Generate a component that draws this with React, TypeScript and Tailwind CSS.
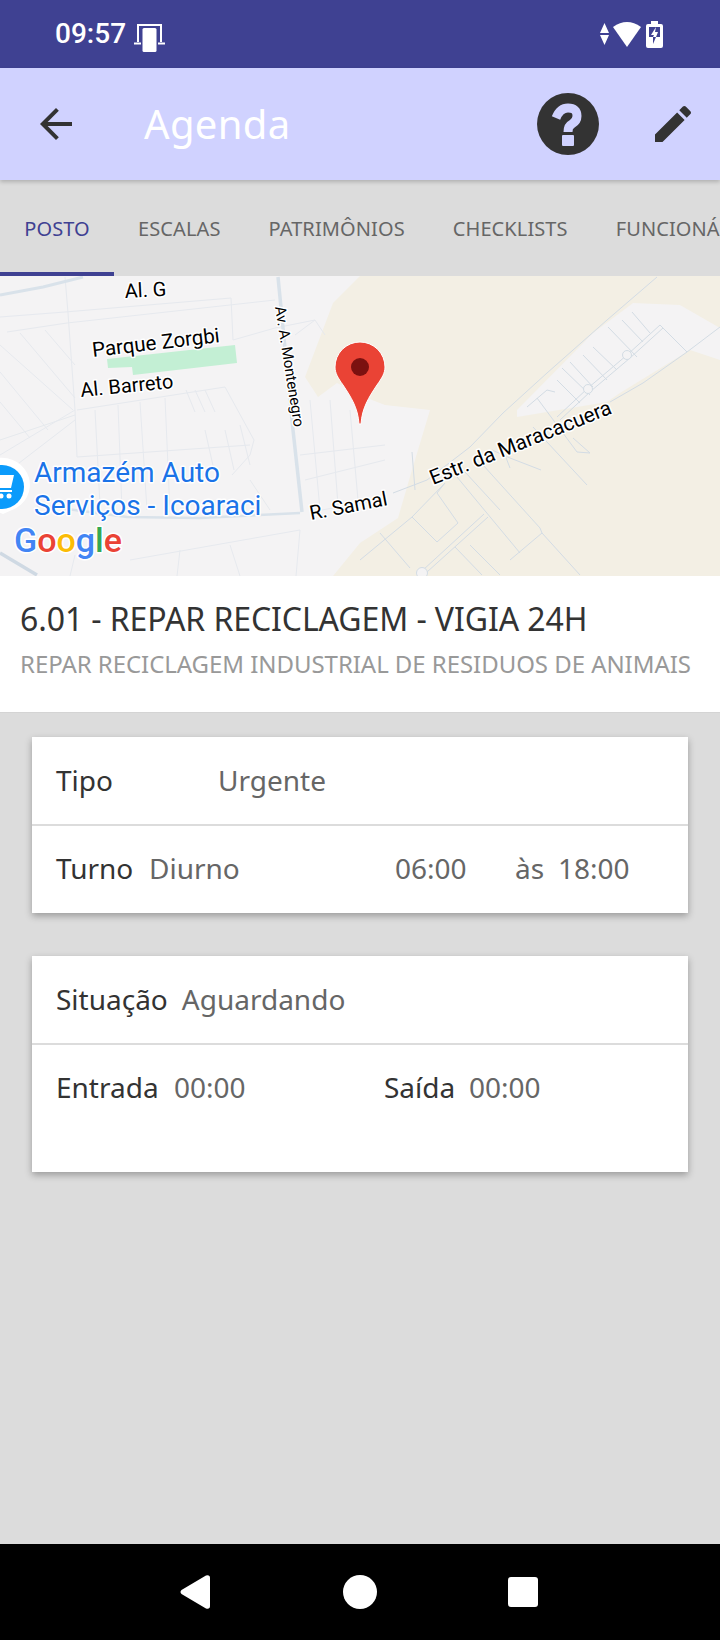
const roads = [
  "M0 295 L43 287 L83 277",
  "M278 277 L293 430 L302 512",
  "M37 505 L127 517 L200 518 L300 513",
  "M0 553 L37 575",
];

const streets = [
  "M65 277 L68 313 L75 410 L77 457",
  "M0 317 L65 312 L231 298 L233 340",
  "M7 332 L67 323 L275 300",
  "M0 345 L73 410",
  "M20 333 L75 398",
  "M45 330 L75 365",
  "M0 372 L48 430",
  "M0 402 L30 438",
  "M75 415 L0 440",
  "M75 420 L10 470",
  "M0 455 L75 410",
  "M77 410 L225 387 L254 440 L250 455 L232 475",
  "M95 410 L100 505",
  "M118 405 L122 510",
  "M140 402 L147 510",
  "M165 398 L170 512",
  "M186 390 L195 412",
  "M195 390 L205 412",
  "M205 390 L215 412",
  "M205 430 L214 470",
  "M225 430 L234 470",
  "M240 425 L250 465",
  "M77 457 L250 445",
  "M250 480 L270 510",
  "M233 340 L275 328",
  "M275 328 L315 320 L325 335",
  "M295 335 L315 320",
  "M310 400 L320 510",
  "M330 400 L338 505",
  "M350 410 L358 500",
  "M300 455 L385 445",
  "M305 480 L385 460",
  "M130 560 L300 530 L296 576",
  "M180 550 L177 576",
  "M70 576 L75 555",
  "M230 545 L240 576",
  "M310 512 L380 500",
];

const darkStreets = [
  "M657 277 L607 320 L547 373 L503 413 L470 447 L427 480 L393 493",
  "M720 327 L687 352 L643 383 L610 402",
  "M660 325 L627 355 L588 388 L557 417",
  "M663 328 L630 358 L591 391 L560 420",
  "M660 325 L687 352",
  "M632 312 L650 333",
  "M622 320 L643 342",
  "M608 327 L637 357",
  "M593 347 L617 370",
  "M583 355 L607 380",
  "M570 362 L593 387",
  "M562 368 L590 395",
  "M557 380 L580 403",
  "M527 407 L547 390 L555 392",
  "M537 398 L577 452 L590 453",
  "M573 438 L590 453",
  "M533 427 L587 485",
  "M483 465 L540 528 L542 533 L580 575",
  "M457 477 L520 553",
  "M465 472 L500 510",
  "M445 483 L437 493 L458 523 L437 542 L412 517 L445 483",
  "M488 517 L427 572",
  "M484 514 L423 570",
  "M542 533 L510 560",
  "M360 560 L412 517",
  "M455 547 L482 575",
  "M380 533 L410 568",
  "M470 545 L500 575",
  "M492 450 L510 458 L541 470",
  "M505 455 L510 468",
  "M412 452 L415 490",
];

function MapView() {
  return (
    <svg viewBox="0 276 720 300" className="block h-[300px] w-[720px] bg-[#f3efe4]">
      <path d="M0 276 L360 276 L333 303 L305 377 L318 397 L337 383 L372 400 L385 405 L430 410 L412 470 L398 518 L360 543 L333 576 L0 576 Z" fill="#f4f3f4" />
      <path d="M633 303 L680 305 L720 328 L720 360 L690 350 L620 393 L607 402 L517 417 L517 410 L593 333 Z" fill="#f4f3f4" />
      <path d="M107 359 L235 345 L237 363 L133 375 L132 367 L108 368 Z" fill="#c3efd4" />
      <g fill="none" stroke="#e6e9ee" strokeWidth="1">
        {streets.map((d) => (
          <path key={d} d={d} />
        ))}
      </g>
      <g fill="none" stroke="#d3dce4" strokeWidth="1">
        {darkStreets.map((d) => (
          <path key={d} d={d} />
        ))}
        <circle cx="627" cy="355" r="4.5" fill="#f4f3f4" />
        <circle cx="588" cy="389" r="4.5" fill="#f4f3f4" />
        <circle cx="422" cy="573" r="5.5" fill="#f4f3f4" />
      </g>
      <g fill="none" stroke="#d9e2ea">
        <path d={roads[0]} strokeWidth="3" />
        <path d={roads[1]} strokeWidth="3.5" />
        <path d={roads[2]} strokeWidth="2.5" />
        <path d={roads[3]} strokeWidth="3.5" stroke="#cfd9e3" />
      </g>

      <g className="font-['Roboto',sans-serif]" fill="#000" stroke="#fff" strokeWidth="3" strokeLinejoin="round" paintOrder="stroke">
        <text x="125" y="298" fontSize="20" transform="rotate(-3 125 298)">Al. G</text>
        <text x="93" y="357" fontSize="20.5" transform="rotate(-6.7 93 357)">Parque Zorgbi</text>
        <text x="81" y="397" fontSize="20" transform="rotate(-5.6 81 397)">Al. Barreto</text>
        <text x="275" y="307" fontSize="15" transform="rotate(81 275 307)">Av. A. Montenegro</text>
        <text x="311" y="520" fontSize="20" transform="rotate(-11 311 520)">R. Samal</text>
        <text x="433" y="485" fontSize="20.7" transform="rotate(-21.8 433 485)">Estr. da Maracacuera</text>
      </g>

      <path d="M359 424 C358 408 351 397 343 385 C338 378 335 373 335 367 A25 25 0 1 1 385 367 C385 373 382 378 377 385 C369 397 362 408 361 424 Z" fill="#ea4335" stroke="#fff" strokeWidth="1" />
      <circle cx="360" cy="367" r="9" fill="#7b1110" />

      <path d="M-26 487 A28 27 0 1 1 12 510 L3 514 L-6 510 Z" fill="#fff" />
      <circle cx="2" cy="487" r="22" fill="#0b9bfb" />
      <path d="M0 475 H14 L11 488 H0 Z M0 490 H12 V492 H0 Z" fill="#fff" />
      <circle cx="1" cy="496" r="2.5" fill="#fff" />
      <circle cx="9" cy="496" r="2.5" fill="#fff" />

      <g className="font-['Roboto',sans-serif]" fill="#1a73e8" stroke="#fff" strokeWidth="3" strokeLinejoin="round" paintOrder="stroke" fontSize="28">
        <text x="34" y="482">Armazém Auto</text>
        <text x="34" y="515">Serviços - Icoaraci</text>
      </g>

      <text x="14" y="552" fontSize="34" fontWeight="500" className="font-['Roboto',sans-serif]" stroke="#fff" strokeWidth="3" strokeLinejoin="round" paintOrder="stroke">
        <tspan fill="#4285f4">G</tspan>
        <tspan fill="#ea4335">o</tspan>
        <tspan fill="#fbbc05">o</tspan>
        <tspan fill="#4285f4">g</tspan>
        <tspan fill="#34a853">l</tspan>
        <tspan fill="#ea4335">e</tspan>
      </text>
    </svg>
  );
}

function StatusBar() {
  return (
    <div className="relative flex h-[68px] shrink-0 items-center justify-between bg-[#3f4192] pl-[55px] pr-[57px] text-white">
      <div className="flex items-center gap-[8px]">
        <span className="font-['Roboto',sans-serif] text-[28px] font-medium leading-[36px]">09:57</span>
        <svg width="32" height="36" viewBox="0 0 32 36" className="block">
          <path d="M4 26 V9 H27 V26" fill="none" stroke="#fff" strokeWidth="2" />
          <path d="M0 27.5 H7 M24 27.5 H31" stroke="#fff" strokeWidth="2" />
          <rect x="8.5" y="12" width="14" height="24" rx="1.5" fill="#fff" />
        </svg>
      </div>
      <div className="flex items-center gap-[4px]">
        <svg width="9" height="22" viewBox="0 0 9 22" className="block">
          <path d="M4.5 0 L9 10 H0 Z M0 12 H9 L4.5 22 Z" fill="#fff" />
        </svg>
        <svg width="28" height="26" viewBox="0 0 28 26" className="block">
          <path d="M14 26 L0 6 Q14 -4 28 6 Z" fill="#fff" />
        </svg>
        <svg width="17" height="27" viewBox="0 0 17 27" className="ml-[1px] block">
          <path d="M5 0 H12 V3 H15 Q17 3 17 5 V25 Q17 27 15 27 H2 Q0 27 0 25 V5 Q0 3 2 3 H5 Z" fill="#fff" />
          <path d="M3 6 H14 V16 H3 Z" fill="#3f4192" />
          <path d="M10 6 L5 14 H8 L7 16 H10 L12 11 H9 Z" fill="#fff" />
          <path d="M7 16 H10 L7 23 Z" fill="#3f4192" />
        </svg>
      </div>
    </div>
  );
}

function AppBar() {
  return (
    <div className="relative z-10 flex h-[112px] shrink-0 items-center bg-[#d0d2ff] pl-[32px] shadow-[0_2px_4px_rgba(0,0,0,0.2)]">
      <svg width="48" height="48" viewBox="0 0 24 24" fill="#333" className="block shrink-0">
        <path d="M20 11H7.83l5.59-5.59L12 4l-8 8 8 8 1.41-1.41L7.83 13H20v-2z" />
      </svg>
      <span className="ml-[64px] w-[146px] text-[40px] leading-[54px] tracking-[0.35px] text-white">Agenda</span>
      <svg width="62" height="62" viewBox="0 0 62 62" className="ml-[247px] block shrink-0">
        <circle cx="31" cy="31" r="31" fill="#333" />
        <path d="M19 25 Q23 15 31 15 Q40 15 40 23 Q40 28 35 31 Q31 33 31 39" fill="none" stroke="#d0d2ff" strokeWidth="9" />
        <rect x="25" y="42" width="12" height="11" rx="1" fill="#d0d2ff" />
      </svg>
      <svg width="48" height="48" viewBox="0 0 24 24" fill="#333" className="ml-[50px] block shrink-0">
        <path d="M3 17.25V21h3.75L17.81 9.94l-3.75-3.75L3 17.25zM20.71 7.04c.39-.39.39-1.02 0-1.41l-2.34-2.34c-.39-.39-1.02-.39-1.41 0l-1.83 1.83 3.75 3.75 1.83-1.83z" />
      </svg>
    </div>
  );
}

function Tabs() {
  const tabs = ["POSTO", "ESCALAS", "PATRIMÔNIOS", "CHECKLISTS", "FUNCIONÁRIOS"];
  return (
    <div className="flex h-[96px] shrink-0 overflow-hidden tracking-[0.1px]">
      {tabs.map((tab, idx) => (
        <div
          key={tab}
          className={
            idx === 0
              ? "flex w-[114px] shrink-0 items-center justify-center border-b-4 border-[#3f4192] pt-[6px] text-[20px] text-[#3f4192]"
              : "flex shrink-0 items-center px-6 pt-[2px] text-[20px] text-[#666]"
          }
        >
          {tab}
        </div>
      ))}
    </div>
  );
}

function Label({ children }: { children: string }) {
  return <span className="text-[28px] leading-[38px] text-[#333]">{children}</span>;
}

function Value({ children }: { children: string }) {
  return <span className="text-[28px] leading-[38px] text-[#666]">{children}</span>;
}

export default function App() {
  return (
    <div className="flex h-[1640px] w-[720px] flex-col overflow-hidden bg-[#dcdcdc] font-['Noto_Sans',sans-serif]">
      <StatusBar />
      <AppBar />
      <Tabs />
      <MapView />

      <div className="h-[137px] shrink-0 border-b border-[#d4d4d4] bg-white px-5 pt-[21px]">
        <div className="text-[32px] leading-[44px] tracking-[-0.09px] text-[#333]">6.01 - REPAR RECICLAGEM - VIGIA 24H</div>
        <div className="mt-[7px] whitespace-nowrap text-[24px] leading-[32px] tracking-[-0.05px] text-[#999]">
          REPAR RECICLAGEM INDUSTRIAL DE RESIDUOS DE ANIMAIS
        </div>
      </div>

      <div className="mx-8 mt-6 h-[176px] shrink-0 bg-white shadow-[0_3px_7px_rgba(0,0,0,0.3)]">
        <div className="flex h-[89px] items-center border-b-2 border-[#dcdcdc] px-6 pb-[2px]">
          <div className="w-[162px]">
            <Label>Tipo</Label>
          </div>
          <Value>Urgente</Value>
        </div>
        <div className="flex h-[87px] items-center px-6 pb-[4px]">
          <div className="w-[93px]">
            <Label>Turno</Label>
          </div>
          <div className="w-[246px]">
            <Value>Diurno</Value>
          </div>
          <div className="w-[120px]">
            <Value>06:00</Value>
          </div>
          <div className="w-[43px]">
            <Value>às</Value>
          </div>
          <Value>18:00</Value>
        </div>
      </div>

      <div className="mx-8 mt-[43px] h-[216px] shrink-0 bg-white shadow-[0_3px_7px_rgba(0,0,0,0.3)]">
        <div className="flex h-[89px] items-center gap-[14px] border-b-2 border-[#dcdcdc] px-6 pb-[2px]">
          <Label>Situação</Label>
          <Value>Aguardando</Value>
        </div>
        <div className="flex items-center px-6 pt-[23px]">
          <div className="w-[118px]">
            <Label>Entrada</Label>
          </div>
          <div className="w-[210px]">
            <Value>00:00</Value>
          </div>
          <div className="w-[85px]">
            <Label>Saída</Label>
          </div>
          <Value>00:00</Value>
        </div>
      </div>

      <div className="mt-auto flex h-[96px] shrink-0 items-center bg-black pl-[180px]">
        <svg width="30" height="34" viewBox="0 0 30 34" className="block">
          <path d="M1.5 15 L26 0.5 Q30 -0.5 30 3 V31 Q30 34.5 26 33.5 L1.5 19 Q-0.5 17 1.5 15 Z" fill="#fff" />
        </svg>
        <div className="ml-[133px] h-[34px] w-[34px] rounded-full bg-white" />
        <div className="ml-[131px] h-[30px] w-[30px] rounded-[3px] bg-white" />
      </div>
    </div>
  );
}
